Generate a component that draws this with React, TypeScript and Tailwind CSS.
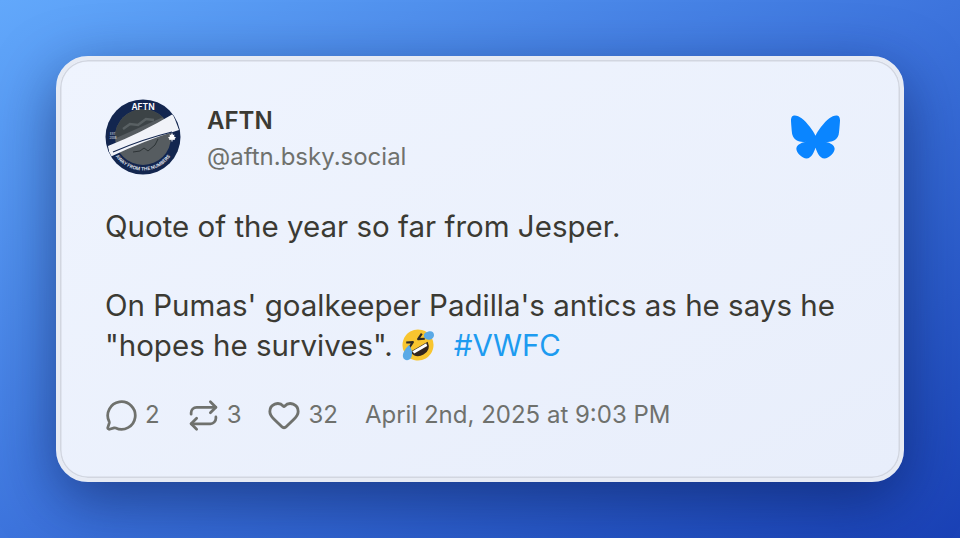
import { Heart, MessageCircle, Repeat } from "lucide-react";

function Avatar() {
  return (
    <svg width="76" height="76" viewBox="0 0 76 76" className="shrink-0">
      <defs>
        <clipPath id="inner"><circle cx="38" cy="38" r="28" /></clipPath>
        <clipPath id="outer"><circle cx="38" cy="38" r="37" /></clipPath>
        <path id="arcBottom" d="M4.500 38 A33.500 33.500 0 0 0 71.500 38" fill="none" />
      </defs>
      <circle cx="38" cy="38" r="37.500" fill="#13264f" />
      <g clipPath="url(#inner)">
        <rect width="76" height="76" fill="#565c60" />
        <path d="M0 44 L76 10 L76 0 L0 0 Z" fill="#3c4346" />
        <path d="M18 30l7-5 8 1 8-6 8 1" stroke="#6d7476" strokeWidth="2.500" fill="none" opacity="0.6" />
        <path d="M28 53l7-1 4-3 4 3 7-6 3-6" stroke="#22282b" strokeWidth="0.800" fill="none" />
      </g>
      <g clipPath="url(#outer)">
        <path d="M3 47 Q36 34 68 15 L74 31 Q38 42 5 58 Z" fill="#f1f3f8" />
      </g>
      <path d="M8 53 Q38 40 67 33" stroke="#13264f" strokeWidth="1.200" fill="none" />
      <text x="38" y="11" textAnchor="middle" fontSize="8.500" fontWeight="600" fill="#fff" fontFamily="Inter, sans-serif">AFTN</text>
      <text fontSize="4.700" fontWeight="600" fill="#e6e9f2" fontFamily="Inter, sans-serif">
        <textPath href="#arcBottom" startOffset="50%" textAnchor="middle">AWAY FROM THE NUMBERS</textPath>
      </text>
      <text x="5" y="36" fontSize="2.800" fill="#e6e9f2" fontFamily="Inter, sans-serif">EST</text>
      <text x="4.500" y="40" fontSize="2.800" fill="#e6e9f2" fontFamily="Inter, sans-serif">2008</text>
      <path d="M71 38.500l-2-1 .5-2-1.500 .5L67 33.500l-1 2.500-1.500-.5.5 2-2 1 1.500 1.500-.5 1 2.500-.3v1.800h1v-1.800l2.500 .3-.5-1z" fill="#fff" />
    </svg>
  );
}

function Emoji() {
  return (
    <svg width="34" height="34" viewBox="0 0 34 34" className="shrink-0">
      <g transform="rotate(-30 17 17)">
        <circle cx="17" cy="17" r="15.500" fill="#f8c52f" />
        <path d="M7 19 H27 Q26 28 17 28 Q8 28 7 19Z" fill="#33261d" />
        <path d="M9 19.500 H25 L24.500 22.500 H9.500Z" fill="#fff" />
        <path d="M8 9l6 3-6 3" stroke="#2d2a26" strokeWidth="2.100" fill="none" strokeLinejoin="round" />
        <path d="M26 9l-6 3 6 3" stroke="#2d2a26" strokeWidth="2.100" fill="none" strokeLinejoin="round" />
      </g>
      <path d="M24 5 C29 2 33 3 33 7 C33 11 28 13 25 11 C23 10 22 7 24 5Z" fill="#5aa9e6" />
      <path d="M8 17 C11 21 12 26 10 30 C8 33 3 33 2 29 C1 25 5 20 8 17Z" fill="#5aa9e6" />
    </svg>
  );
}

export default function App() {
  return (
    <div className="w-[960px] h-[538px] flex items-center justify-center bg-gradient-to-br from-[#62a8fb] via-[#3d74dd] to-[#1a41b6] font-['Inter',sans-serif] overflow-hidden">
      <div className="w-[848px] h-[426px] rounded-[32px] border-[4px] border-[#e7ebf4] bg-gradient-to-br from-[#eff4fe] to-[#e8eefb] shadow-[inset_0_0_0_1.500px_#d2d6e0,0_18px_60px_rgba(8,24,80,0.55)] px-[45px] pt-[39px] flex flex-col">
        <div className="flex items-start justify-between h-[76px]">
          <div className="flex items-center gap-[26px]">
            <Avatar />
            <div className="flex flex-col mt-[4px]">
              <span className="text-[24px] leading-[36px] font-semibold text-[#3b3a33]">AFTN</span>
              <span className="text-[24px] leading-[36px] text-[#6f716d]">@aftn.bsky.social</span>
            </div>
          </div>
          <svg width="49" height="44" viewBox="0 0 568 501" className="mt-[16px] mr-[15px]" fill="#0a85ff">
            <path d="M123.121 33.664C188.241 82.553 258.281 181.68 284 234.873c25.719-53.192 95.759-152.32 160.879-201.21C491.866-1.611 568-28.906 568 57.947c0 17.346-9.945 145.713-15.778 166.555-20.275 72.453-94.155 90.933-159.875 79.748C507.222 323.8 536.444 388.56 473.333 453.32c-119.86 122.992-172.272-30.859-185.702-70.281-2.462-7.227-3.614-10.608-3.631-7.733-.017-2.875-1.169.506-3.631 7.733-13.43 39.422-65.842 193.273-185.702 70.281-63.111-64.76-33.89-129.52 80.986-149.071-65.72 11.185-139.6-7.295-159.875-79.748C9.945 203.659 0 75.291 0 57.946 0-28.906 76.135-1.612 123.121 33.664Z" />
          </svg>
        </div>
        <div className="mt-[32px] text-[29.500px] leading-[39.500px] text-[#3b3a33]">
          <p>Quote of the year so far from Jesper.</p>
          <p className="mt-[39.500px]">On Pumas' goalkeeper Padilla's antics as he says he</p>
          <p className="flex items-center">
            "hopes he survives".<span className="ml-[8px]"><Emoji /></span>
            <span className="ml-[19px] text-[#1d9bf0]">#VWFC</span>
          </p>
        </div>
        <div className="mt-[32px] flex items-center text-[24px] leading-[36px] text-[#6f716d]">
          <MessageCircle size={33} strokeWidth={2} />
          <span className="ml-[7px]">2</span>
          <Repeat size={33} strokeWidth={2} className="ml-[27px]" />
          <span className="ml-[7px]">3</span>
          <Heart size={34} strokeWidth={2} className="ml-[26px]" />
          <span className="ml-[7px]">32</span>
          <span className="ml-[27px]">April 2nd, 2025 at 9:03 PM</span>
        </div>
      </div>
    </div>
  );
}
